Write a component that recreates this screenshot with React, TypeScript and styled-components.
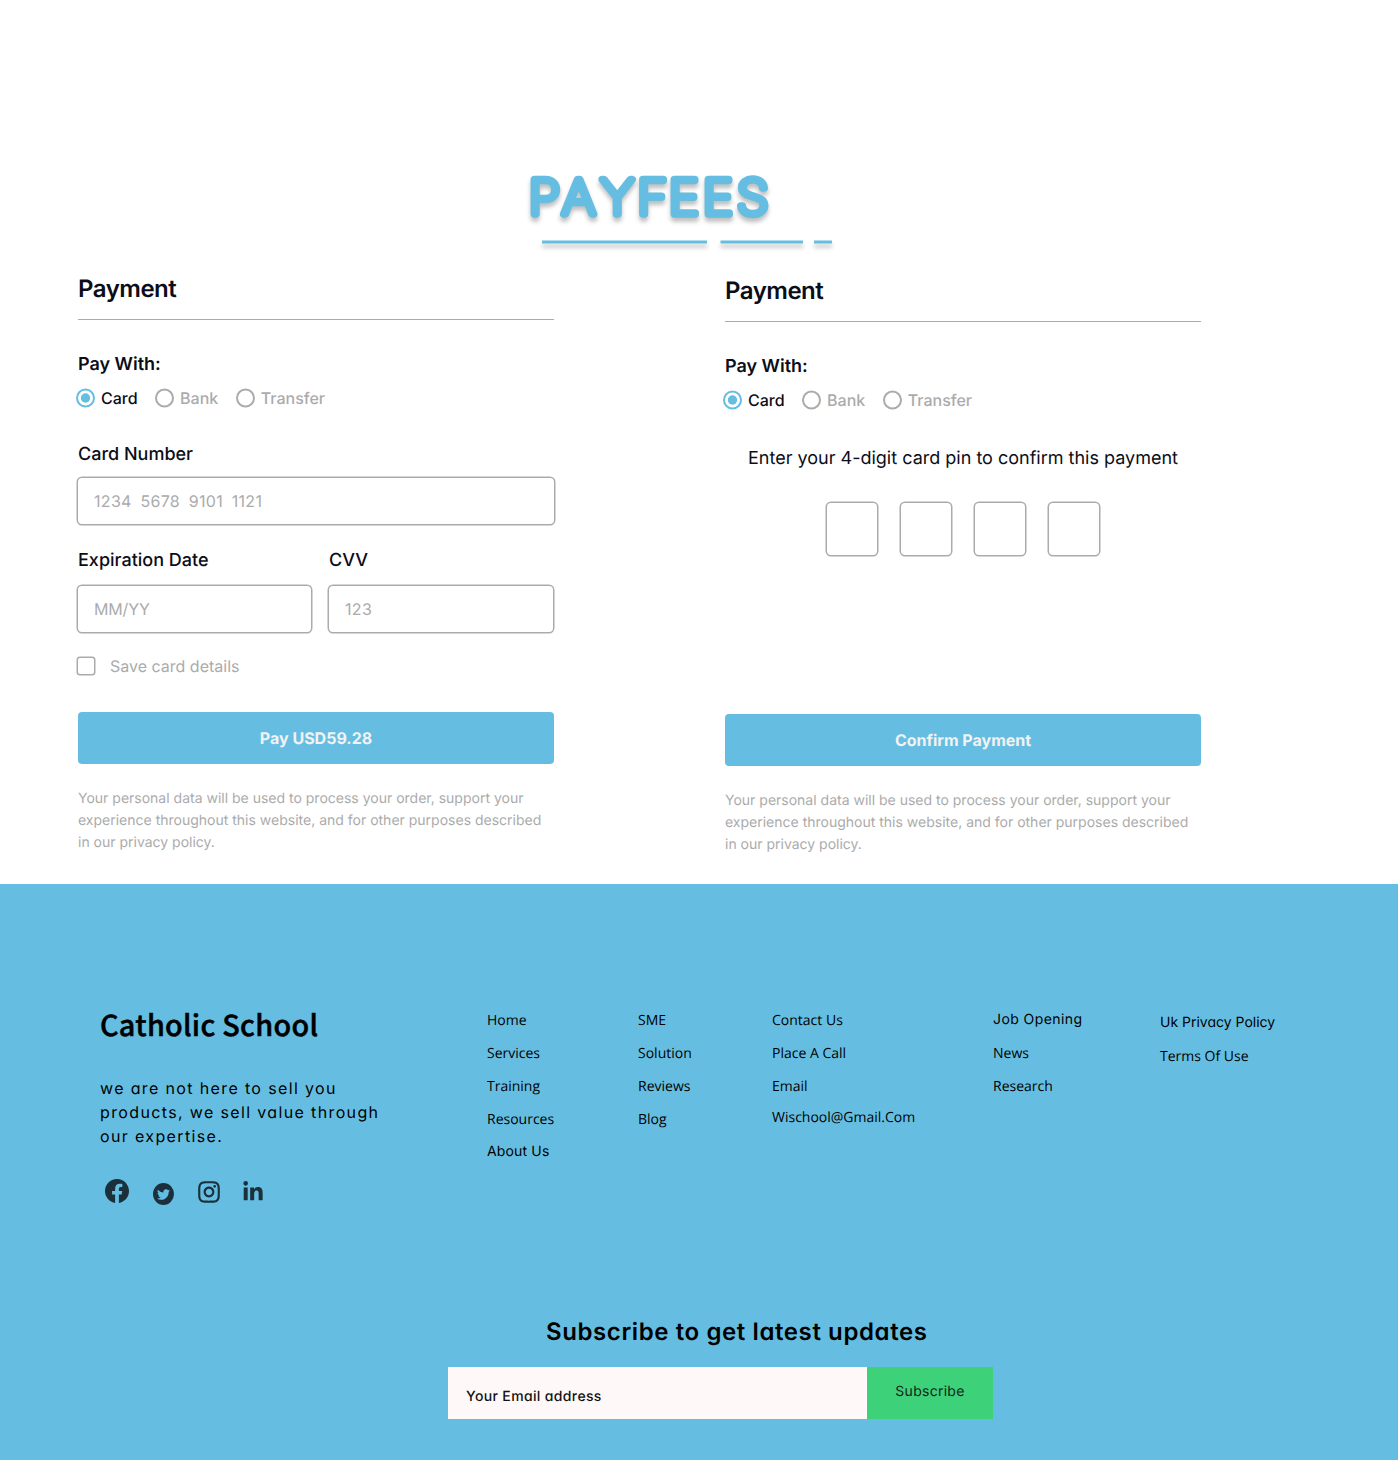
import React from "react";
import styled, { createGlobalStyle } from "styled-components";
import { BsFacebook } from "react-icons/bs";
import { FaTwitter, FaLinkedinIn } from "react-icons/fa";
import { RiInstagramLine } from "react-icons/ri";

const blue = "#65bee2";
const ink = "#0b0d17";
const gray = "#ababab";
const inter = `Inter, "Liberation Sans", sans-serif`;
const openSans = `"Open Sans", "Noto Sans", sans-serif`;

const GlobalStyle = createGlobalStyle`
  *, *::before, *::after { box-sizing: border-box; }
  body { margin: 0; background: #fff; font-family: ${inter}; color: ${ink}; text-rendering: geometricPrecision; }
  h1, h2, h3, p { margin: 0; font-weight: inherit; }
  input, button { font-family: inherit; border: 0; outline: 0; margin: 0; text-rendering: inherit; }
`;

const Page = styled.div`
  width: 1398px;
  height: 1460px;
  display: flex;
  flex-direction: column;
  overflow: hidden;
`;

const Header = styled.header`
  height: 273px;
  padding: 163px 0 0 520px;
`;

const LogoDrawing = styled.svg`
  display: block;
  overflow: visible;
  filter: drop-shadow(0 4px 2px rgba(0, 0, 0, 0.25));
`;

const Panels = styled.main`
  height: 611px;
  padding-left: 78px;
  display: flex;
  gap: 171px;
  align-items: flex-start;
`;

const Panel = styled.section<{ $drop?: number }>`
  width: 476px;
  margin-top: ${(p) => p.$drop ?? 0}px;
  display: flex;
  flex-direction: column;
`;

const PanelTitle = styled.h2`
  padding: 1px 0 15px;
  font-size: 24px;
  font-weight: 600;
  line-height: 30px;
  letter-spacing: -0.5px;
  border-bottom: 1px solid ${gray};
`;

const PayWith = styled.h3`
  margin-top: 34px;
  font-size: 18px;
  font-weight: 600;
  line-height: 22px;
`;

const Methods = styled.div`
  display: flex;
  height: 20px;
  margin: 12px 0 0 -3px;
  gap: 16.5px;
`;

const Method = styled.label<{ $active?: boolean }>`
  display: flex;
  align-items: center;
  gap: 6px;
  font-size: 16px;
  font-weight: 500;
  line-height: 20px;
  color: ${(p) => (p.$active ? ink : gray)};
`;

const FormArea = styled.div`
  height: 304px;
`;

const FieldRow = styled.div`
  display: flex;
  gap: 18px;
`;

const Field = styled.div<{ $width: number; $top: number; $gap: number }>`
  width: ${(p) => p.$width}px;
  margin-top: ${(p) => p.$top}px;
  display: flex;
  flex-direction: column;
  gap: ${(p) => p.$gap}px;
`;

const FieldLabel = styled.label`
  font-size: 18px;
  font-weight: 500;
  line-height: 22px;
`;

const Input = styled.input<{ $spacing: number }>`
  width: 100%;
  height: 46px;
  padding: 0 16px;
  border-radius: 4px;
  background: #fff;
  box-shadow: 0 0 0 1.5px ${gray};
  font-size: 16px;
  letter-spacing: ${(p) => p.$spacing}px;
  word-spacing: -0.5px;
  &::placeholder {
    color: ${gray};
    opacity: 1;
  }
`;

const SaveRow = styled.label`
  margin-top: 26px;
  height: 16px;
  display: flex;
  align-items: center;
  gap: 16px;
  font-size: 16px;
  line-height: 16px;
  color: ${gray};
`;

const CheckBox = styled.span`
  width: 16px;
  height: 16px;
  border-radius: 2px;
  box-shadow: 0 0 0 1.5px ${gray};
`;

const PinPrompt = styled.p`
  padding-top: 38px;
  font-size: 18px;
  line-height: 22px;
  text-align: center;
  white-space: nowrap;
`;

const PinRow = styled.div`
  margin-top: 33px;
  display: flex;
  justify-content: center;
  gap: 24px;
`;

const PinBox = styled.input`
  width: 50px;
  height: 52px;
  border-radius: 4px;
  box-shadow: 0 0 0 1.5px ${gray};
`;

const PayButton = styled.button`
  height: 52px;
  border-radius: 4px;
  background: ${blue};
  color: #f2f2f2;
  font-size: 16px;
  font-weight: 700;
`;

const Notice = styled.p`
  margin-top: 24px;
  font-size: 14px;
  line-height: 22px;
  color: ${gray};
  white-space: nowrap;
`;

const Footer = styled.footer`
  height: 576px;
  background: ${blue};
  color: #000;
  display: flex;
  flex-direction: column;
`;

const FooterTop = styled.div`
  height: 430px;
  padding: 120px 0 0 100px;
  display: flex;
`;

const Brand = styled.div`
  width: 387px;
`;

const BrandName = styled.h2`
  font-family: "Noto Sans CJK SC", "Noto Sans", sans-serif;
  font-size: 28.8px;
  font-weight: 500;
  line-height: 42px;
  letter-spacing: 0.27px;
  -webkit-text-stroke: 0.5px #000;
`;

const Pitch = styled.p`
  margin-top: 30px;
  font-size: 16px;
  line-height: 24px;
  letter-spacing: 1.36px;
  font-feature-settings: "cv11";
  white-space: nowrap;
`;

const Socials = styled.div`
  margin: 31px 0 0 5px;
  display: flex;
  color: #1b303a;
`;

const Social = styled.a<{ $left: number; $top: number }>`
  display: flex;
  margin: ${(p) => p.$top}px 0 0 ${(p) => p.$left}px;
`;

const TwitterDisc = styled.span`
  width: 21px;
  height: 22px;
  border-radius: 50%;
  background: #1b303a;
  color: ${blue};
  display: flex;
  align-items: center;
  justify-content: center;
`;

const LinkColumn = styled.nav<{ $width: number; $top?: number }>`
  width: ${(p) => p.$width}px;
  padding-top: ${(p) => p.$top ?? 0}px;
  display: flex;
  flex-direction: column;
`;

const FooterLink = styled.a<{ $line?: number; $after?: number; $spacing?: number }>`
  font-family: ${openSans};
  font-size: 14px;
  line-height: ${(p) => p.$line ?? 33}px;
  margin-bottom: ${(p) => p.$after ?? 0}px;
  letter-spacing: ${(p) => p.$spacing ?? 0}px;
  white-space: nowrap;
`;

const RoundLink = styled(FooterLink)`
  font-family: ${inter};
  font-feature-settings: "cv11";
`;

const SubscribeTitle = styled.h2`
  margin-left: 546px;
  font-size: 24px;
  font-weight: 600;
  line-height: 36px;
  letter-spacing: 0.6px;
  font-feature-settings: "cv11";
  white-space: nowrap;
`;

const SubscribeForm = styled.form`
  margin: 17px 0 0 448px;
  display: flex;
  height: 52px;
  width: 545px;
`;

const EmailInput = styled.input`
  width: 419px;
  padding: 7px 18px 0;
  background: #fff8f8;
  border-radius: 0;
  font-size: 14px;
  font-weight: 500;
  letter-spacing: 0.36px;
  font-feature-settings: "cv11";
  &::placeholder {
    color: #111;
    opacity: 1;
  }
`;

const SubscribeButton = styled.button`
  width: 126px;
  padding: 0 0 3px;
  background: #3dd179;
  color: #10251a;
  font-size: 14px;
  letter-spacing: 0.28px;
  font-feature-settings: "cv11";
`;

const logoLetters: [string, number][] = [
  ["P", 8.7],
  ["A", 42.3],
  ["Y", 80.7],
  ["F", 117.2],
  ["E", 148.7],
  ["E", 182.7],
  ["S", 217],
];
const logoStretch = 1.08;

function Logo() {
  return (
    <LogoDrawing width="320" height="90" viewBox="0 0 320 90">
      <text
        y="51"
        x={logoLetters.map(([, x]) => x / logoStretch).join(" ")}
        transform={`scale(${logoStretch} 1)`}
        fontFamily="Inter, sans-serif"
        fontSize="47.6"
        fontWeight="100"
        fill={blue}
        stroke={blue}
        strokeWidth="7.4"
        strokeLinejoin="round"
      >
        {logoLetters.map(([letter]) => letter).join("")}
      </text>
      <path d="M22 79H187M200.5 79H283M294 79H312" stroke={blue} strokeWidth="3" />
    </LogoDrawing>
  );
}

function Radio({ on }: { on?: boolean }) {
  return (
    <svg width="20" height="20" viewBox="0 0 20 20" fill="none">
      <circle cx="10.5" cy="10" r="8.5" stroke={on ? blue : gray} strokeWidth="2" />
      {on && <circle cx="10.5" cy="10" r="4.7" fill={blue} />}
    </svg>
  );
}

function PanelHead() {
  return (
    <>
      <PanelTitle>Payment</PanelTitle>
      <PayWith>Pay With:</PayWith>
      <Methods>
        <Method $active><Radio on />Card</Method>
        <Method><Radio />Bank</Method>
        <Method><Radio />Transfer</Method>
      </Methods>
    </>
  );
}

function PanelFoot({ action }: { action: string }) {
  return (
    <>
      <PayButton type="button">{action}</PayButton>
      <Notice>
        Your personal data will be used to process your order, support your
        <br />
        experience throughout this website, and for other purposes described
        <br />
        in our privacy policy.
      </Notice>
    </>
  );
}

export default function App() {
  return (
    <Page>
      <GlobalStyle />
      <Header><Logo /></Header>
      <Panels>
        <Panel>
          <PanelHead />
          <FormArea>
            <Field $width={476} $top={36} $gap={12}>
              <FieldLabel>Card Number</FieldLabel>
              <Input $spacing={0.32} placeholder="1234  5678  9101  1121" />
            </Field>
            <FieldRow>
              <Field $width={233} $top={26} $gap={14}>
                <FieldLabel>Expiration Date</FieldLabel>
                <Input $spacing={-0.15} placeholder="MM/YY" />
              </Field>
              <Field $width={224} $top={26} $gap={14}>
                <FieldLabel>CVV</FieldLabel>
                <Input $spacing={0.32} placeholder="123" />
              </Field>
            </FieldRow>
            <SaveRow><CheckBox />Save card details</SaveRow>
          </FormArea>
          <PanelFoot action="Pay USD59.28" />
        </Panel>
        <Panel $drop={2}>
          <PanelHead />
          <FormArea>
            <PinPrompt>Enter your 4-digit card pin to confirm this payment</PinPrompt>
            <PinRow>
              {[0, 1, 2, 3].map((n) => <PinBox key={n} />)}
            </PinRow>
          </FormArea>
          <PanelFoot action="Confirm Payment" />
        </Panel>
      </Panels>
      <Footer>
        <FooterTop>
          <Brand>
            <BrandName>Catholic School</BrandName>
            <Pitch>
              we are not here to sell you
              <br />
              products, we sell value through
              <br />
              our expertise.
            </Pitch>
            <Socials>
              <Social $left={0} $top={0}><BsFacebook size={24} /></Social>
              <Social $left={24} $top={4}><TwitterDisc><FaTwitter size={13} /></TwitterDisc></Social>
              <Social $left={22} $top={0}><RiInstagramLine size={26} /></Social>
              <Social $left={20} $top={2}><FaLinkedinIn size={22} /></Social>
            </Socials>
          </Brand>
          <LinkColumn $width={151}>
            <FooterLink>Home</FooterLink>
            <FooterLink>Services</FooterLink>
            <FooterLink>Training</FooterLink>
            <FooterLink>Resources</FooterLink>
            <RoundLink $line={31} $spacing={0.15}>About Us</RoundLink>
          </LinkColumn>
          <LinkColumn $width={134}>
            <FooterLink>SME</FooterLink>
            <FooterLink>Solution</FooterLink>
            <FooterLink>Reviews</FooterLink>
            <FooterLink>Blog</FooterLink>
          </LinkColumn>
          <LinkColumn $width={221}>
            <FooterLink>Contact Us</FooterLink>
            <FooterLink>Place A Call</FooterLink>
            <FooterLink>Email</FooterLink>
            <FooterLink $line={30}>Wischool@Gmail.Com</FooterLink>
          </LinkColumn>
          <LinkColumn $width={167}>
            <RoundLink $line={31} $after={2} $spacing={0.42}>Job Opening</RoundLink>
            <FooterLink>News</FooterLink>
            <FooterLink>Research</FooterLink>
          </LinkColumn>
          <LinkColumn $width={140} $top={2}>
            <RoundLink $after={1}>Uk Privacy Policy</RoundLink>
            <FooterLink>Terms Of Use</FooterLink>
          </LinkColumn>
        </FooterTop>
        <SubscribeTitle>Subscribe to get latest updates</SubscribeTitle>
        <SubscribeForm>
          <EmailInput placeholder="Your Email address" />
          <SubscribeButton type="button">Subscribe</SubscribeButton>
        </SubscribeForm>
      </Footer>
    </Page>
  );
}
